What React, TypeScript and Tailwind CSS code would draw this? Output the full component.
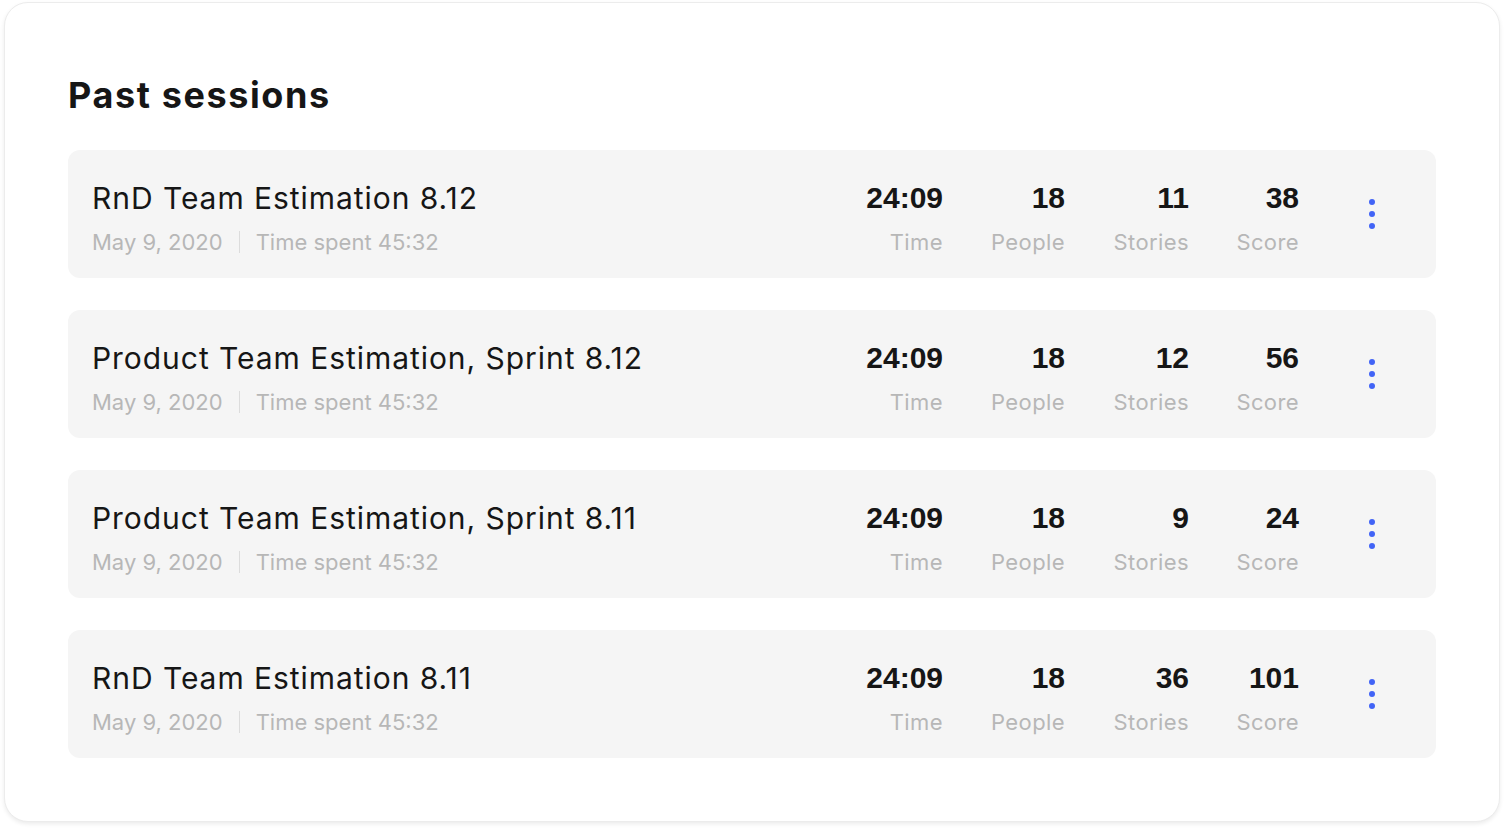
type Session = {
  title: string;
  date: string;
  spent: string;
  time: string;
  people: number;
  stories: number;
  score: number;
};

const sessions: Session[] = [
  { title: "RnD Team Estimation 8.12", date: "May 9, 2020", spent: "45:32", time: "24:09", people: 18, stories: 11, score: 38 },
  { title: "Product Team Estimation, Sprint 8.12", date: "May 9, 2020", spent: "45:32", time: "24:09", people: 18, stories: 12, score: 56 },
  { title: "Product Team Estimation, Sprint 8.11", date: "May 9, 2020", spent: "45:32", time: "24:09", people: 18, stories: 9, score: 24 },
  { title: "RnD Team Estimation 8.11", date: "May 9, 2020", spent: "45:32", time: "24:09", people: 18, stories: 36, score: 101 },
];

function Stat({ value, label, width }: { value: string | number; label: string; width: string }) {
  return (
    <div className={`flex flex-col items-end ${width}`}>
      <span className="whitespace-nowrap font-['Liberation_Sans',sans-serif] text-[30px] font-bold leading-[36px] text-[#161616]">
        {value}
      </span>
      <span className="mt-[13px] whitespace-nowrap text-[22px] leading-[26px] tracking-[0.4px] text-[#b7b7b7]">{label}</span>
    </div>
  );
}

function SessionRow({ s }: { s: Session }) {
  return (
    <div className="flex h-[128px] items-center rounded-[12px] bg-[#f5f5f5] pl-6 pr-[61px] pt-[6px]">
      <div className="flex min-w-0 flex-1 flex-col">
        <span className="whitespace-nowrap text-[30px] leading-[36px] tracking-[0.95px] text-[#161616]">{s.title}</span>
        <div className="mt-[13px] flex items-center text-[22px] leading-[26px] text-[#b7b7b7]">
          <span>{s.date}</span>
          <span className="mx-4 h-[22px] w-px bg-[#dcdcdc]" />
          <span>Time spent {s.spent}</span>
        </div>
      </div>
      <div className="flex items-center">
        <Stat value={s.time} label="Time" width="w-[110px]" />
        <Stat value={s.people} label="People" width="w-[122px]" />
        <Stat value={s.stories} label="Stories" width="w-[124px]" />
        <Stat value={s.score} label="Score" width="w-[110px]" />
        <button className="-mt-[6px] ml-[70px] flex w-[6px] flex-col items-center gap-[6px]">
          <span className="h-[6px] w-[6px] rounded-full bg-[#4264f6]" />
          <span className="h-[6px] w-[6px] rounded-full bg-[#4264f6]" />
          <span className="h-[6px] w-[6px] rounded-full bg-[#4264f6]" />
        </button>
      </div>
    </div>
  );
}

export default function App() {
  return (
    <div className="min-h-screen bg-white px-1 pb-[6px] pt-[2px] font-['Inter',sans-serif]">
      <div className="rounded-[24px] border border-[#ececec] bg-white px-[63px] pb-[63px] pt-[70px] shadow-[0_2px_4px_rgba(0,0,0,0.08)]">
        <h2 className="text-[36px] font-bold leading-[44px] tracking-[1.6px] text-[#161616]">Past sessions</h2>
        <div className="mt-[33px] flex flex-col gap-8">
          {sessions.map((s, i) => (
            <SessionRow key={i} s={s} />
          ))}
        </div>
      </div>
    </div>
  );
}
